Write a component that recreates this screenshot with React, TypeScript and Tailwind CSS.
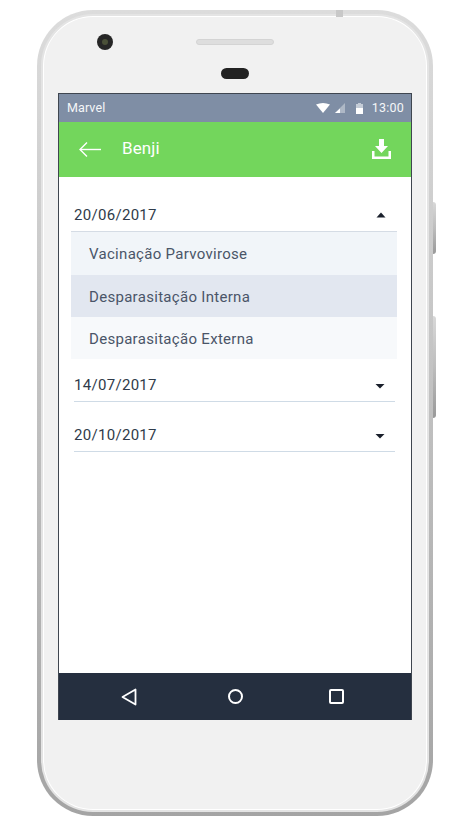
import React from 'react'

function DateRow({ date, open }: { date: string; open?: boolean }) {
    return (
        <div className={`ml-[15px] mr-[16px] flex h-[34px] items-center justify-between pr-[10px] ${open ? '' : 'border-b border-[#cfdbe6] pt-[2px]'}`}>
            <span className="text-[15px] leading-none tracking-[0.3px] text-[#2f3b4a]">{date}</span>
            <svg width="10" height="6" viewBox="0 0 10 6" className={`fill-[#1a202c] ${open ? 'translate-x-px' : ''}`}>
                {open ? <path d="M5 0.5 L9.5 5.5 H0.5 Z" /> : <path d="M0.5 1 H9.5 L5 5.5 Z" />}
            </svg>
        </div>
    )
}

function Option({ label, className }: { label: string; className: string }) {
    return (
        <div className={`flex items-center pl-[18px] pt-[2px] text-[15px] leading-none tracking-[0.3px] text-[#4a5568] ${className}`}>
            {label}
        </div>
    )
}

export default function App() {
    return (
        <div className="relative h-[828px] w-[457px] bg-white pl-[37px] pt-[10px] font-['Roboto',sans-serif]">
            {/* side keys */}
            <div className="absolute left-[336px] top-[10px] h-[7px] w-[7px] bg-[#c8c8c8]" />
            <div className="absolute left-[433px] top-[202px] h-[52px] w-[3px] rounded-r-sm bg-gradient-to-b from-[#d8d8d8] via-[#bdbdbd] to-[#999]" />
            <div className="absolute left-[433px] top-[316px] h-[102px] w-[3px] rounded-r-sm bg-gradient-to-b from-[#d8d8d8] via-[#bdbdbd] to-[#999]" />

            {/* phone body */}
            <div className="h-[806px] w-[396px] rounded-[56px] bg-gradient-to-b from-[#dcdcdc] via-[#c0c0c0] to-[#a4a4a4] p-[4px]">
                <div className="h-full w-full rounded-[52px] bg-[#e4e4e4] p-[2px]">
                    <div className="h-full w-full rounded-[50px] bg-white p-px">
                        <div className="flex h-full w-full flex-col items-center rounded-[49px] bg-[#f1f1f1]">
                            <div className="relative h-[76px] w-full shrink-0">
                                <div className="absolute left-[53px] top-[17px] flex h-[16px] w-[16px] items-center justify-center rounded-full bg-[#262626]">
                                    <div className="h-[6px] w-[6px] rounded-full bg-[#4a5038]" />
                                </div>
                                <div className="absolute left-[152px] top-[22px] h-[6px] w-[78px] rounded-full border border-[#d4d4d4] bg-[#dedede]" />
                                <div className="absolute left-[177px] top-[51px] h-[11px] w-[28px] rounded-full bg-[#222]" />
                            </div>

                            {/* screen */}
                            <div className="flex h-[627px] w-[354px] shrink-0 flex-col border-x border-t border-[#3f4650] bg-white">
                                <div className="flex h-[28px] shrink-0 items-center justify-between bg-[#7f8ea5] pl-[8px] pr-[7px] text-[12.5px] tracking-[0.1px] text-[#f4f6f8]">
                                    <span>Marvel</span>
                                    <div className="flex items-center">
                                        <svg width="14" height="10" viewBox="0 0 14 10" className="fill-white">
                                            <path d="M0 1.5 Q7 -1.5 14 1.5 L7 10 Z" />
                                        </svg>
                                        <svg width="11" height="10" viewBox="0 0 11 10" className="ml-[5px]">
                                            <path d="M10 0 V10 H0 Z" fill="#aeb8c6" />
                                            <path d="M5 5.5 V10 H0 Z" fill="#fff" />
                                        </svg>
                                        <svg width="7" height="11" viewBox="0 0 7 11" className="ml-[10px]">
                                            <path d="M2 0 H5 V1 H7 V11 H0 V1 H2 Z" fill="#c4ccd7" />
                                            <rect x="0" y="5" width="7" height="6" fill="#fff" />
                                        </svg>
                                        <span className="ml-[9px] tracking-[0.2px]">13:00</span>
                                    </div>
                                </div>
                                <div className="flex h-[55px] shrink-0 items-center bg-[#73d65c] pb-px pl-[20px] pr-[20px] text-white">
                                    <svg width="22" height="15" viewBox="0 0 22 15" fill="none" stroke="currentColor" strokeWidth="1.4">
                                        <path d="M22 7.5 H1" />
                                        <path d="M8 0.5 L1 7.5 L8 14.5" />
                                    </svg>
                                    <span className="ml-[21px] text-[17px] tracking-[0.1px]">Benji</span>
                                    <svg width="19" height="20" viewBox="0 0 19 20" className="ml-auto fill-white">
                                        <path d="M7 0 H12 V7 H16 L9.5 14 L3 7 H7 Z" />
                                        <path d="M0 12 H2.5 V17.5 H16.5 V12 H19 V20 H0 Z" />
                                    </svg>
                                </div>

                                <div className="flex-1 pt-[21px]">
                                    <DateRow date="20/06/2017" open />
                                    <div className="ml-[12px] mr-[14px] -mt-px flex flex-col">
                                        <Option label="Vacinação Parvovirose" className="h-[44px] border-t border-[#d5dce5] bg-[#f1f5f9]" />
                                        <Option label="Desparasitação Interna" className="h-[42px] bg-[#e2e7f0]" />
                                        <Option label="Desparasitação Externa" className="h-[42px] bg-[#f7f9fb]" />
                                    </div>
                                    <div className="mt-[9px]">
                                        <DateRow date="14/07/2017" />
                                    </div>
                                    <div className="mt-[16px]">
                                        <DateRow date="20/10/2017" />
                                    </div>
                                </div>

                                <div className="flex h-[47px] shrink-0 items-center bg-[#252f3f] pl-[62px] text-white">
                                    <svg width="16" height="18" viewBox="0 0 16 18" fill="none" stroke="currentColor" strokeWidth="1.8" strokeLinejoin="round">
                                        <path d="M14.5 1.5 V16.5 L1.5 9 Z" />
                                    </svg>
                                    <div className="ml-[91px] h-[15px] w-[15px] rounded-full border-2 border-white" />
                                    <div className="ml-[86px] h-[15px] w-[15px] rounded-[2px] border-2 border-white" />
                                </div>
                            </div>
                        </div>
                    </div>
                </div>
            </div>
        </div>
    )
}
